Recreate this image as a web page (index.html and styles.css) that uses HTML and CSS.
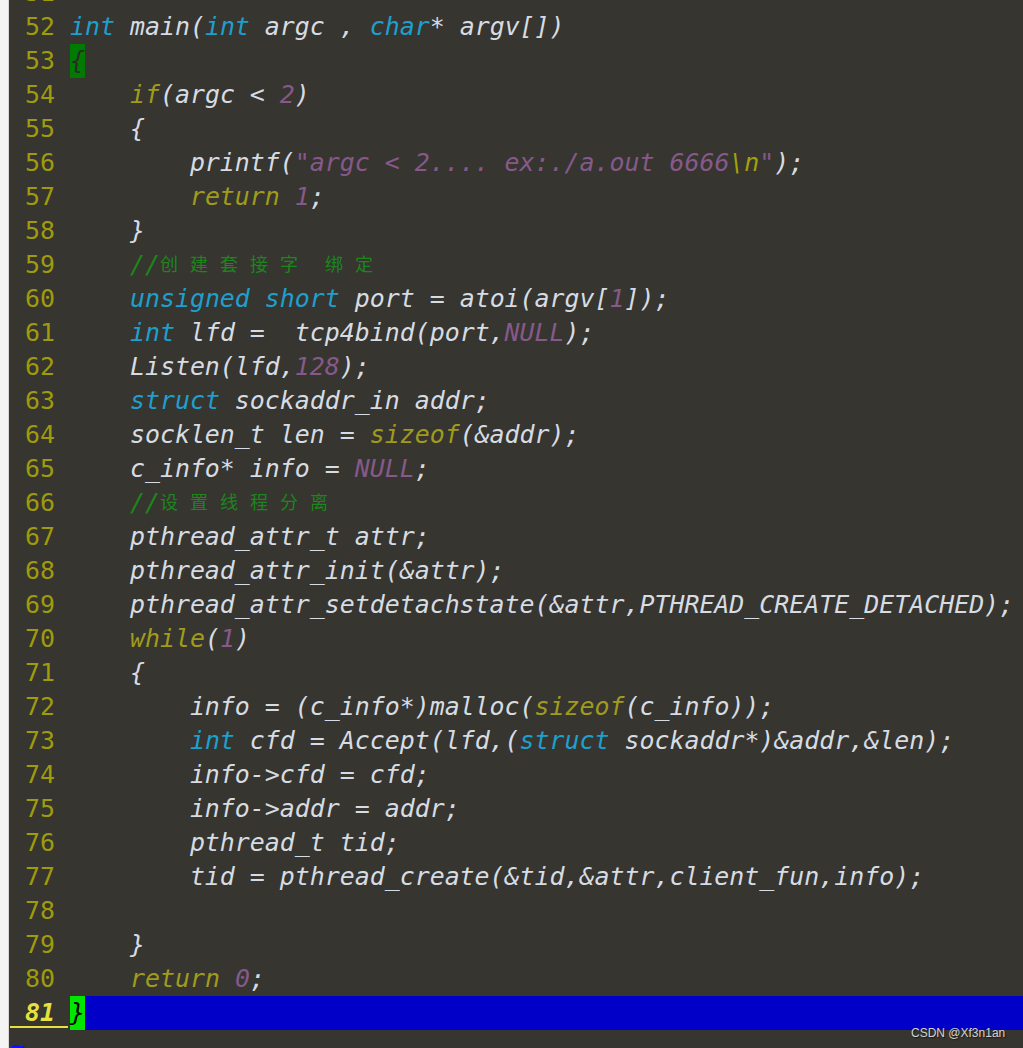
FILE: index.html
```html
<!DOCTYPE html>
<html lang="zh">
<head>
<meta charset="utf-8">
<title>main.c</title>
<link rel="stylesheet" href="styles.css">
</head>
<body>
<div class="page">
  <div class="strip"></div>
  <div class="editor">
    <div class="ln"><span class="nr">51</span><span class="code"></span></div>
    <div class="ln"><span class="nr">52</span><span class="code"><span class="ty">int</span> main(<span class="ty">int</span> argc , <span class="ty">char</span>* argv[])</span></div>
    <div class="ln"><span class="nr">53</span><span class="code"><span class="match">{</span></span></div>
    <div class="ln"><span class="nr">54</span><span class="code">    <span class="st">if</span>(argc &lt; <span class="cn">2</span>)</span></div>
    <div class="ln"><span class="nr">55</span><span class="code">    {</span></div>
    <div class="ln"><span class="nr">56</span><span class="code">        printf(<span class="cn">"argc &lt; 2.... ex:./a.out 6666</span><span class="sp">\n</span><span class="cn">"</span>);</span></div>
    <div class="ln"><span class="nr">57</span><span class="code">        <span class="st">return</span> <span class="cn">1</span>;</span></div>
    <div class="ln"><span class="nr">58</span><span class="code">    }</span></div>
    <div class="ln"><span class="nr">59</span><span class="code">    <span class="cm">//<span class="zh">创</span><span class="zh">建</span><span class="zh">套</span><span class="zh">接</span><span class="zh">字</span> <span class="zh">绑</span><span class="zh">定</span></span></span></div>
    <div class="ln"><span class="nr">60</span><span class="code">    <span class="ty">unsigned</span> <span class="ty">short</span> port = atoi(argv[<span class="cn">1</span>]);</span></div>
    <div class="ln"><span class="nr">61</span><span class="code">    <span class="ty">int</span> lfd =  tcp4bind(port,<span class="cn">NULL</span>);</span></div>
    <div class="ln"><span class="nr">62</span><span class="code">    Listen(lfd,<span class="cn">128</span>);</span></div>
    <div class="ln"><span class="nr">63</span><span class="code">    <span class="ty">struct</span> sockaddr_in addr;</span></div>
    <div class="ln"><span class="nr">64</span><span class="code">    socklen_t len = <span class="st">sizeof</span>(&amp;addr);</span></div>
    <div class="ln"><span class="nr">65</span><span class="code">    c_info* info = <span class="cn">NULL</span>;</span></div>
    <div class="ln"><span class="nr">66</span><span class="code">    <span class="cm">//<span class="zh">设</span><span class="zh">置</span><span class="zh">线</span><span class="zh">程</span><span class="zh">分</span><span class="zh">离</span></span></span></div>
    <div class="ln"><span class="nr">67</span><span class="code">    pthread_attr_t attr;</span></div>
    <div class="ln"><span class="nr">68</span><span class="code">    pthread_attr_init(&amp;attr);</span></div>
    <div class="ln"><span class="nr">69</span><span class="code">    pthread_attr_setdetachstate(&amp;attr,PTHREAD_CREATE_DETACHED);</span></div>
    <div class="ln"><span class="nr">70</span><span class="code">    <span class="st">while</span>(<span class="cn">1</span>)</span></div>
    <div class="ln"><span class="nr">71</span><span class="code">    {</span></div>
    <div class="ln"><span class="nr">72</span><span class="code">        info = (c_info*)malloc(<span class="st">sizeof</span>(c_info));</span></div>
    <div class="ln"><span class="nr">73</span><span class="code">        <span class="ty">int</span> cfd = Accept(lfd,(<span class="ty">struct</span> sockaddr*)&amp;addr,&amp;len);</span></div>
    <div class="ln"><span class="nr">74</span><span class="code">        info-&gt;cfd = cfd;</span></div>
    <div class="ln"><span class="nr">75</span><span class="code">        info-&gt;addr = addr;</span></div>
    <div class="ln"><span class="nr">76</span><span class="code">        pthread_t tid;</span></div>
    <div class="ln"><span class="nr">77</span><span class="code">        tid = pthread_create(&amp;tid,&amp;attr,client_fun,info);</span></div>
    <div class="ln"><span class="nr">78</span><span class="code"></span></div>
    <div class="ln"><span class="nr">79</span><span class="code">    }</span></div>
    <div class="ln"><span class="nr">80</span><span class="code">    <span class="st">return</span> <span class="cn">0</span>;</span></div>
    <div class="ln cursor"><span class="nr">81</span><span class="code"><span class="match cur">}</span></span></div>
    <div class="ln"><span class="tilde">~</span></div>
  </div>
</div>
<div class="watermark">CSDN @Xf3n1an</div>
</body>
</html>
```
FILE: styles.css
```css
html, body {
  margin: 0;
  padding: 0;
  height: 1048px;
  overflow: hidden;
  background: #363530;
}

.page {
  display: flex;
  height: 1048px;
}

.strip {
  width: 8px;
  flex: none;
  background: #f4f4f4;
  border-right: 1px solid #d8d8d8;
}

.editor {
  flex: 1;
  padding-left: 1px;
  margin-top: -24px;
  font-family: "DejaVu Sans Mono", "Liberation Mono", monospace;
  font-style: italic;
  font-size: 24.9px;
  line-height: 34px;
  color: #d6dce2;
}

.ln {
  display: flex;
  height: 34px;
  white-space: pre;
}

.nr {
  width: 45px;
  padding-right: 15px;
  flex: none;
  text-align: right;
  font-style: normal;
  color: #9f9b0c;
}

.code {
  flex: 1;
}

.ty { color: #1e9fcd; }
.st { color: #a09b1c; }
.cn { color: #86598a; }
.sp { color: #a3a10a; }
.cm { color: #1c861c; }

.zh {
  display: inline-block;
  width: 30px;
  font-family: "Noto Sans CJK SC", sans-serif;
  font-style: normal;
  font-size: 18px;
  vertical-align: 2px;
  line-height: 22px;
}

.match {
  display: inline-block;
  width: 15px;
  height: 34px;
  background: #007a00;
  color: #2b2b2b;
  vertical-align: top;
}

.cursor .code {
  background: #0000c8;
}

.cursor .nr {
  color: #e8e03c;
  font-weight: bold;
  font-style: italic;
  background: linear-gradient(#e8e03c, #e8e03c) 0 30px / 58px 2px no-repeat;
}

.match.cur {
  background: #00e600;
  color: #000;
}

.tilde {
  color: #1010ff;
  font-weight: bold;
  font-style: normal;
}

.watermark {
  position: absolute;
  left: 911px;
  top: 1025px;
  font-family: "Liberation Sans", Arial, sans-serif;
  font-size: 12px;
  line-height: 16px;
  color: #d2d2d2;
  text-shadow: 1px 1px 1px #1a1a1a;
}
```
